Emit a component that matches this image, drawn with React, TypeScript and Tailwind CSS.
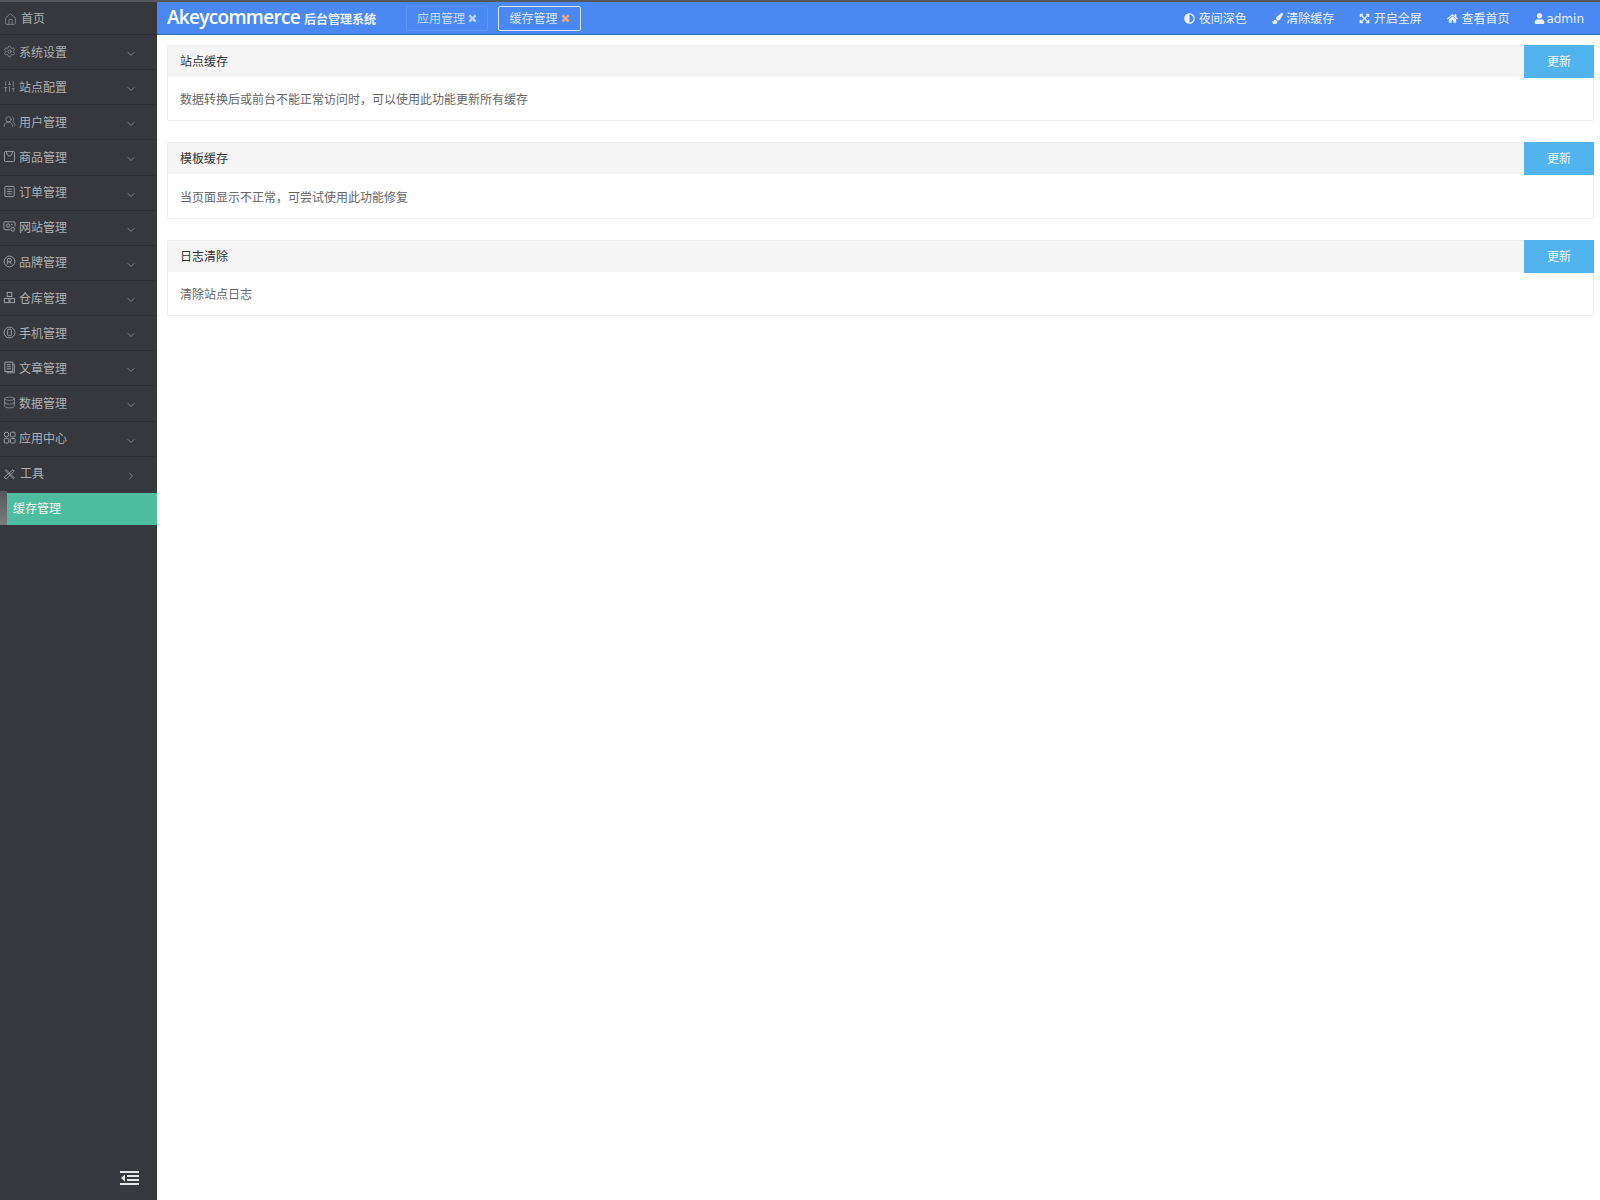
import { ChevronDown, ChevronRight, Database, Home, SlidersVertical, UsersRound, Settings } from 'lucide-react'
import { FaAdjust, FaPaintBrush, FaExpandArrowsAlt, FaHome, FaUser } from 'react-icons/fa'
import type { ComponentType } from 'react'

type IconProps = { className?: string; strokeWidth?: number }

// line icons the icon packages don't have
function Line({ className, children }: { className?: string; children: React.ReactNode }) {
  return (
    <svg viewBox="0 0 14 14" fill="none" stroke="currentColor" strokeWidth="1" className={className}>
      {children}
    </svg>
  )
}

const BagIcon = ({ className }: IconProps) => (
  <Line className={className}>
    <rect x="1.5" y="1.5" width="11" height="11" rx="1.5" />
    <path d="M4 2c0 3 1.2 4.5 3 4.5S10 5 10 2" />
  </Line>
)
const OrderIcon = ({ className }: IconProps) => (
  <Line className={className}>
    <rect x="2" y="1.5" width="10" height="11" rx="1" />
    <path d="M4.5 4.5h5M4.5 7h5M4.5 9.5h5" />
  </Line>
)
const SiteIcon = ({ className }: IconProps) => (
  <Line className={className}>
    <path d="M7.5 10.5H2a1 1 0 0 1-1-1V3a1 1 0 0 1 1-1h10a1 1 0 0 1 1 1v4" />
    <circle cx="10.5" cy="10" r="2" />
    <circle cx="5.5" cy="6" r="1.8" />
    <path d="M8.5 5h2" />
  </Line>
)
const BrandIcon = ({ className }: IconProps) => (
  <Line className={className}>
    <circle cx="7" cy="7" r="5.8" />
    <path d="M5 10.2V3.8h2.4a1.7 1.7 0 0 1 0 3.5H5M7.4 7.3l2 2.9" />
  </Line>
)
const WarehouseIcon = ({ className }: IconProps) => (
  <Line className={className}>
    <rect x="4.5" y="1.5" width="5" height="4.5" />
    <rect x="1.5" y="8" width="5" height="4.5" />
    <rect x="7.5" y="8" width="5" height="4.5" />
  </Line>
)
const PhoneIcon = ({ className }: IconProps) => (
  <Line className={className}>
    <circle cx="7" cy="7" r="5.8" />
    <rect x="5" y="3.5" width="4" height="7" rx="1" />
  </Line>
)
const ArticleIcon = ({ className }: IconProps) => (
  <Line className={className}>
    <path d="M11 3.5h1.2v9.2H4" />
    <rect x="2" y="1.2" width="8.5" height="10" />
    <path d="M4 4h4.5M4 6.2h4.5M4 8.4h4.5" />
  </Line>
)
const AppsIcon = ({ className }: IconProps) => (
  <Line className={className}>
    <circle cx="3.8" cy="3.8" r="2.5" />
    <rect x="8" y="1.3" width="5" height="5" rx="1" />
    <rect x="1.3" y="8" width="5" height="5" rx="1" />
    <rect x="8" y="8" width="5" height="5" rx="1" />
  </Line>
)
const ToolsIcon = ({ className }: IconProps) => (
  <Line className={className}>
    <path d="M2.5 2l9.5 9.5-1 1L1.5 3z" />
    <path d="M10.5 2l1.5 1.5-9 9-2-.5-.5-1.5z" />
  </Line>
)

const XIcon = ({ className }: IconProps) => (
  <svg viewBox="0 0 10 10" fill="none" stroke="currentColor" strokeWidth="2.6" className={className}>
    <path d="M1.5 1.5l7 7M8.5 1.5l-7 7" />
  </svg>
)

const menus: { label: string; icon: ComponentType<IconProps> }[] = [
  { label: '系统设置', icon: Settings },
  { label: '站点配置', icon: SlidersVertical },
  { label: '用户管理', icon: UsersRound },
  { label: '商品管理', icon: BagIcon },
  { label: '订单管理', icon: OrderIcon },
  { label: '网站管理', icon: SiteIcon },
  { label: '品牌管理', icon: BrandIcon },
  { label: '仓库管理', icon: WarehouseIcon },
  { label: '手机管理', icon: PhoneIcon },
  { label: '文章管理', icon: ArticleIcon },
  { label: '数据管理', icon: Database },
  { label: '应用中心', icon: AppsIcon },
]

const actions: { label: string; gap: string; icon: ComponentType<{ className?: string }> }[] = [
  { label: '夜间深色', gap: 'gap-[3.5px]', icon: FaAdjust },
  { label: '清除缓存', gap: 'gap-[3.5px]', icon: FaPaintBrush },
  { label: '开启全屏', gap: 'gap-[3.5px]', icon: FaExpandArrowsAlt },
  { label: '查看首页', gap: 'gap-[3.5px]', icon: FaHome },
  { label: 'admin', gap: 'gap-[1px]', icon: FaUser },
]

const panels = [
  { title: '站点缓存', text: '数据转换后或前台不能正常访问时，可以使用此功能更新所有缓存' },
  { title: '模板缓存', text: '当页面显示不正常，可尝试使用此功能修复' },
  { title: '日志清除', text: '清除站点日志' },
]

function Sidebar() {
  return (
    <aside className="w-[157px] shrink-0 bg-[#36383e] flex flex-col text-[12px] text-[#aeafb1]">
      {/* Home */}
      <div className="h-[33px] flex items-center pl-[4px] pt-[2px] gap-[4px] border-b border-[#2c2e33]">
        <Home className="w-[13px] h-[13px]" strokeWidth={1} />
        <span>首页</span>
      </div>

      {menus.map((m) => (
        <div key={m.label} className="h-[35.15px] flex items-center pl-[3px] pr-[20px] pt-[1px] border-b border-[#2c2e33]">
          <m.icon className="w-[13px] h-[13px] mr-[3px] -mt-[3px] opacity-90" strokeWidth={1.2} />
          <span className="flex-1">{m.label}</span>
          <ChevronDown className="w-[12px] h-[12px] mt-[3px]" strokeWidth={1.3} />
        </div>
      ))}

      {/* Tools */}
      <div className="h-[34px] flex items-center pl-[4px] pr-[20px] pt-[1px]">
        <ToolsIcon className="w-[12px] h-[12px] mr-[4px] opacity-90" />
        <span className="flex-1">工具</span>
        <ChevronRight className="w-[12px] h-[12px] mt-[3px]" strokeWidth={1.3} />
      </div>

      {/* Active item */}
      <div className="relative h-[32px] mt-[2px] flex items-center pl-[13px] bg-[#4ebd9f] text-[#f2f2f2]">
        <div className="absolute left-0 -top-[2px] bottom-0 w-[7px] bg-gradient-to-b from-[#55575a] to-[#7b7c7d]" />
        <span>缓存管理</span>
      </div>

      <div className="mt-auto h-[29px] flex justify-end items-start pr-[18px]">
        <svg viewBox="0 0 19 14" className="w-[19px] h-[14px] text-[#e6e6e7]" fill="currentColor">
          <rect x="0" y="0" width="19" height="2" />
          <rect x="7" y="4" width="12" height="2" />
          <rect x="7" y="8" width="12" height="2" />
          <rect x="0" y="12" width="19" height="2" />
          <path d="M5 3.5v7L1 7z" />
        </svg>
      </div>
    </aside>
  )
}

function Header() {
  return (
    <header className="h-[33px] bg-[#4a89f3] border-b border-[#2e70b8] flex items-center text-white text-[12px] shrink-0">
      <div className="pl-[10px] w-[249px] flex items-baseline shrink-0 pt-[1px]">
        <span className="text-[19px] font-['Open_Sans',sans-serif] font-semibold tracking-[-0.7px] leading-none">Akeycommerce</span>
        <span className="ml-[4px] font-bold text-[#eef4fe]">后台管理系统</span>
      </div>
      <div className="h-[25px] w-[82px] flex items-center justify-center gap-[3px] pt-[1px] border border-[#5c96f5] rounded-[2px] text-[#c9dcfb]">
        应用管理
        <XIcon className="w-[9px] h-[9px] text-[#bcd3f9]" />
      </div>
      <div className="ml-[10px] h-[25px] w-[83px] flex items-center justify-center gap-[3px] pt-[1px] border border-[#d9e6fc] rounded-[2px] text-[#dbe7fc]">
        缓存管理
        <XIcon className="w-[9px] h-[9px] text-[#f6a583]" />
      </div>
      <div className="ml-auto flex items-center gap-[25px] pr-[16px] pt-[1px] text-[#eaf1fe]">
        {actions.map((a) => (
          <div key={a.label} className={`flex items-center ${a.gap}`}>
            <a.icon className="w-[11px] h-[11px]" />
            <span>{a.label}</span>
          </div>
        ))}
      </div>
    </header>
  )
}

function Panel({ title, text }: { title: string; text: string }) {
  return (
    <section className="h-[76.5px] bg-white border border-[#eeeeee] rounded-[2px] flex flex-col">
      <div className="h-[31px] bg-[#f5f5f5] relative flex items-center pl-[12px] pt-[1px] text-[#333333]">
        {title}
        <button className="absolute right-[-1px] top-[-1px] w-[70px] h-[33px] pt-[1px] bg-[#52b4ee] text-[#f0f8fe]">更新</button>
      </div>
      <div className="flex-1 flex items-center pl-[12px] pt-[3px] text-[#666666]">{text}</div>
    </section>
  )
}

export default function App() {
  return (
    <div className="h-[1200px] flex flex-col bg-white text-[12px] font-['DejaVu_Sans','Noto_Sans_CJK_SC',sans-serif] overflow-hidden">
      <div className="h-[2px] bg-[#55575c] shrink-0" />
      <div className="flex-1 flex min-h-0">
        <Sidebar />
        <div className="flex-1 flex flex-col">
          <Header />
          <main className="pt-[9.75px] pl-[10px] pr-[6px] flex flex-col gap-[21px]">
            {panels.map((p) => (
              <Panel key={p.title} title={p.title} text={p.text} />
            ))}
          </main>
        </div>
      </div>
    </div>
  )
}
